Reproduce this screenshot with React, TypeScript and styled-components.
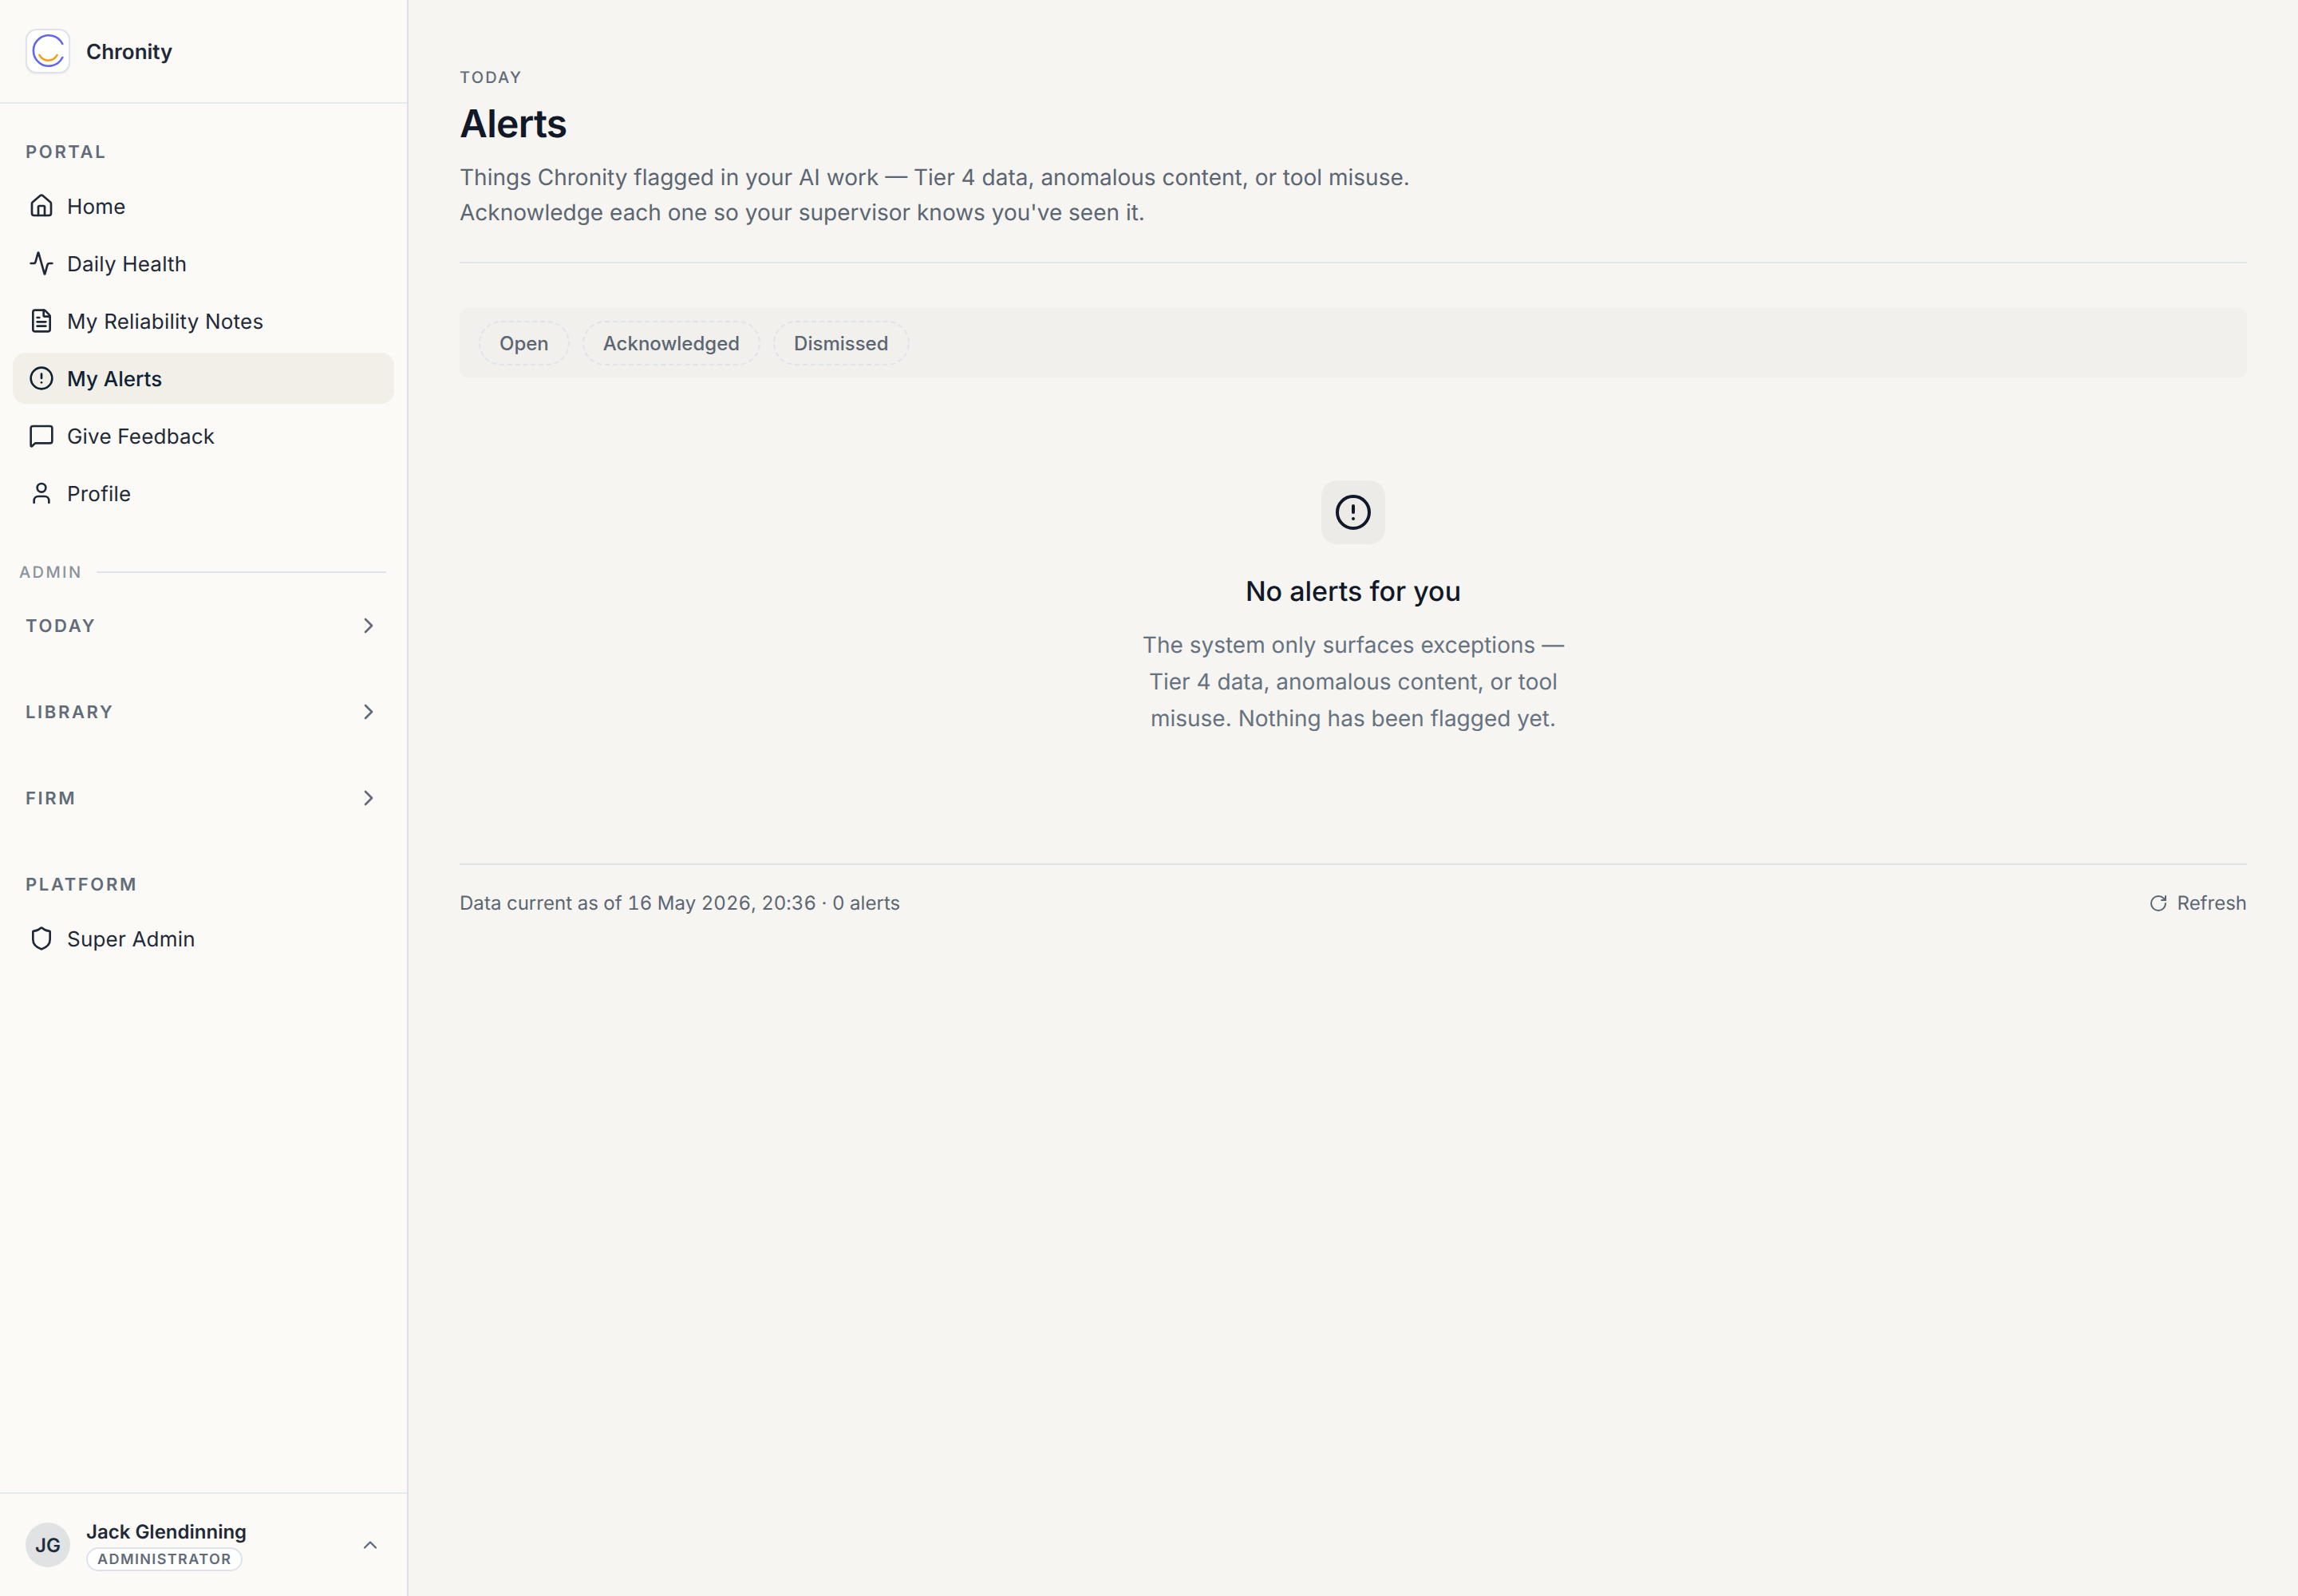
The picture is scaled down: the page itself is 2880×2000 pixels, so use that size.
import React from 'react';
import styled, { createGlobalStyle } from 'styled-components';
import {
  Activity,
  ChevronRight,
  ChevronUp,
  CircleAlert,
  FileText,
  House,
  MessageSquare,
  RotateCw,
  Shield,
  User,
} from 'lucide-react';

const GlobalStyle = createGlobalStyle`
  html, body {
    margin: 0;
    padding: 0;
    background: #f6f5f1;
  }
  * {
    box-sizing: border-box;
  }
  body {
    font-family: Inter, "Liberation Sans", sans-serif;
    color: #1f2937;
    text-rendering: geometricPrecision;
  }
`;

const Shell = styled.div`
  display: flex;
  width: 100%;
  height: 2000px;
`;

const Sidebar = styled.aside`
  width: 512px;
  flex-shrink: 0;
  display: flex;
  flex-direction: column;
  background: #fbfaf6;
  border-right: 2px solid #dcdfe8;
`;

const Brand = styled.div`
  height: 130px;
  flex-shrink: 0;
  display: flex;
  align-items: center;
  gap: 20px;
  padding: 0 32px;
  border-bottom: 2px solid #e8e9ea;
`;

const LogoBox = styled.div`
  width: 56px;
  height: 56px;
  display: flex;
  align-items: center;
  justify-content: center;
  background: #ffffff;
  border: 2px solid #dfe2ea;
  border-radius: 14px;
  box-shadow: 0 1px 2px rgba(17, 24, 39, 0.08);
`;

const BrandName = styled.span`
  padding-top: 3px;
  font-size: 26px;
  line-height: 40px;
  font-weight: 600;
  color: #1f2937;
`;

const Nav = styled.nav`
  flex: 1;
  display: flex;
  flex-direction: column;
  padding-top: 44px;
`;

const SectionLabel = styled.div`
  height: 32px;
  padding: 1px 0 0 32px;
  font-size: 22px;
  line-height: 32px;
  font-weight: 600;
  letter-spacing: 2.64px;
  text-transform: uppercase;
  color: #626c79;
`;

const NavList = styled.div<{ $top: number }>`
  display: flex;
  flex-direction: column;
  gap: 8px;
  padding: 0 16px;
  margin-top: ${(p) => p.$top}px;
`;

const NavItem = styled.a<{ $active?: boolean }>`
  height: 64px;
  display: flex;
  align-items: center;
  gap: 16px;
  padding: 0 20px;
  border-radius: 16px;
  font-size: 26px;
  line-height: 40px;
  font-weight: ${(p) => (p.$active ? 500 : 400)};
  letter-spacing: ${(p) => (p.$active ? '0' : '0.2px')};
  color: ${(p) => (p.$active ? '#0f2233' : '#1f2937')};
  background: ${(p) => (p.$active ? '#f1efe8' : 'transparent')};
`;

const NavLabel = styled.span`
  padding-top: 3px;
`;

const AdminRow = styled.div`
  display: flex;
  align-items: center;
  gap: 18px;
  height: 24px;
  margin: 55px 26px 0 24px;
  font-size: 20px;
  font-weight: 500;
  letter-spacing: 2.4px;
  color: #8a929d;
`;

const AdminLine = styled.span`
  flex: 1;
  height: 2px;
  background: #e0e3ea;
`;

const Groups = styled.div`
  display: flex;
  flex-direction: column;
  gap: 48px;
  margin-top: 25px;
`;

const GroupRow = styled.div`
  height: 60px;
  display: flex;
  align-items: center;
  justify-content: space-between;
  padding: 0 32px;
  font-size: 22px;
  font-weight: 600;
  letter-spacing: 2.64px;
  color: #626c79;
`;

const GroupName = styled.span`
  padding-top: 2px;
`;

const PlatformBlock = styled.div`
  margin-top: 62px;
`;

const UserBar = styled.div`
  height: 130px;
  flex-shrink: 0;
  display: flex;
  align-items: center;
  gap: 20px;
  padding: 0 32px;
  border-top: 2px solid #e8e9ea;
`;

const Avatar = styled.div`
  width: 56px;
  height: 56px;
  flex-shrink: 0;
  display: flex;
  align-items: center;
  justify-content: center;
  border-radius: 50%;
  background: #e0e2e3;
  font-size: 24px;
  font-weight: 600;
  color: #1f2d3d;
`;

const UserInfo = styled.div`
  flex: 1;
  display: flex;
  flex-direction: column;
  align-items: flex-start;
  gap: 2px;
`;

const UserName = styled.div`
  font-size: 24px;
  line-height: 34px;
  font-weight: 600;
  color: #1f2937;
`;

const RoleBadge = styled.span`
  height: 30px;
  display: inline-flex;
  align-items: center;
  padding: 0 12px;
  background: #ffffff;
  border: 2px solid #dfe2ea;
  border-radius: 15px;
  font-size: 18px;
  font-weight: 600;
  letter-spacing: 1.4px;
  color: #626c79;
`;

const Main = styled.main`
  flex: 1;
  min-width: 0;
  background: #f6f5f1;
  padding: 81px 64px 0;
`;

const PageHead = styled.header`
  padding-bottom: 40px;
  border-bottom: 2px solid #e2e4e8;
`;

const Eyebrow = styled.div`
  font-size: 20px;
  line-height: 32px;
  font-weight: 500;
  letter-spacing: 2.2px;
  color: #626c79;
`;

const Title = styled.h1`
  margin: 10px 0 0;
  font-size: 48px;
  line-height: 64px;
  font-weight: 600;
  letter-spacing: -0.72px;
  color: #111827;
`;

const Lead = styled.p`
  margin: 13px 0 0;
  font-size: 28px;
  line-height: 44px;
  color: #5c6673;
`;

const FilterBar = styled.div`
  height: 88px;
  margin-top: 56px;
  display: flex;
  align-items: center;
  gap: 16px;
  padding: 0 24px;
  background: #f1f0ec;
  border-radius: 12px;
`;

const FilterPill = styled.button`
  height: 56px;
  padding: 0 24px;
  background: transparent;
  border: 2px dashed #e0e3ea;
  border-radius: 28px;
  font-family: inherit;
  font-size: 24px;
  font-weight: 500;
  color: #5c6673;
`;

const Empty = styled.section`
  margin-top: 128px;
  display: flex;
  flex-direction: column;
  align-items: center;
  text-align: center;
`;

const EmptyIcon = styled.div`
  width: 80px;
  height: 80px;
  display: flex;
  align-items: center;
  justify-content: center;
  background: #ecebe7;
  border-radius: 20px;
  color: #111827;
`;

const EmptyTitle = styled.h2`
  margin: 36px 0 0;
  font-size: 34px;
  line-height: 48px;
  font-weight: 500;
  color: #111827;
`;

const EmptyBody = styled.p`
  margin: 19px 0 0;
  max-width: 560px;
  font-size: 28px;
  line-height: 46px;
  color: #677280;
`;

const Footer = styled.footer`
  margin-top: 159px;
  padding-top: 30px;
  display: flex;
  align-items: center;
  justify-content: space-between;
  border-top: 2px solid #dfe1e5;
  font-size: 24px;
  line-height: 36px;
  font-variant-numeric: tabular-nums;
  color: #5c6673;
`;

const FooterNote = styled.span`
  letter-spacing: 0.04px;
`;

const RefreshButton = styled.span`
  display: inline-flex;
  align-items: center;
  gap: 12px;
`;

const portal = [
  { label: 'Home', icon: House },
  { label: 'Daily Health', icon: Activity },
  { label: 'My Reliability Notes', icon: FileText },
  { label: 'My Alerts', icon: CircleAlert, active: true },
  { label: 'Give Feedback', icon: MessageSquare },
  { label: 'Profile', icon: User },
];

const groups = ['TODAY', 'LIBRARY', 'FIRM'];

function Logo() {
  return (
    <svg width="52" height="52" viewBox="0 0 52 52" fill="none" strokeLinecap="round" strokeWidth="2.6">
      <path d="M44.3 17A19.2 19.2 0 1 0 44.3 34" stroke="#6366f1" />
      <path d="M15.5 31A12.4 12.4 0 0 0 37.5 31" stroke="#f59e0b" />
    </svg>
  );
}

export default function App() {
  return (
    <Shell>
      <GlobalStyle />
      <Sidebar>
        <Brand>
          <LogoBox>
            <Logo />
          </LogoBox>
          <BrandName>Chronity</BrandName>
        </Brand>
        <Nav>
          <SectionLabel>Portal</SectionLabel>
          <NavList $top={20}>
            {portal.map((item) => (
              <NavItem key={item.label} $active={item.active}>
                <item.icon size={32} />
                <NavLabel>{item.label}</NavLabel>
              </NavItem>
            ))}
          </NavList>
          <AdminRow>
            ADMIN
            <AdminLine />
          </AdminRow>
          <Groups>
            {groups.map((g) => (
              <GroupRow key={g}>
                <GroupName>{g}</GroupName>
                <ChevronRight size={32} />
              </GroupRow>
            ))}
          </Groups>
          <PlatformBlock>
            <SectionLabel>Platform</SectionLabel>
            <NavList $top={20}>
              <NavItem>
                <Shield size={32} />
                <NavLabel>Super Admin</NavLabel>
              </NavItem>
            </NavList>
          </PlatformBlock>
        </Nav>
        <UserBar>
          <Avatar>JG</Avatar>
          <UserInfo>
            <UserName>Jack Glendinning</UserName>
            <RoleBadge>ADMINISTRATOR</RoleBadge>
          </UserInfo>
          <ChevronUp size={28} color="#626c79" />
        </UserBar>
      </Sidebar>
      <Main>
        <PageHead>
          <Eyebrow>TODAY</Eyebrow>
          <Title>Alerts</Title>
          <Lead>
            Things Chronity flagged in your AI work — Tier 4 data, anomalous content, or tool misuse.
            <br />
            Acknowledge each one so your supervisor knows you've seen it.
          </Lead>
        </PageHead>
        <FilterBar>
          <FilterPill>Open</FilterPill>
          <FilterPill>Acknowledged</FilterPill>
          <FilterPill>Dismissed</FilterPill>
        </FilterBar>
        <Empty>
          <EmptyIcon>
            <CircleAlert size={48} />
          </EmptyIcon>
          <EmptyTitle>No alerts for you</EmptyTitle>
          <EmptyBody>
            The system only surfaces exceptions — Tier 4 data, anomalous content, or tool misuse. Nothing has been flagged yet.
          </EmptyBody>
        </Empty>
        <Footer>
          <FooterNote>Data current as of 16 May 2026, 20:36 · 0 alerts</FooterNote>
          <RefreshButton>
            <RotateCw size={24} />
            Refresh
          </RefreshButton>
        </Footer>
      </Main>
    </Shell>
  );
}
